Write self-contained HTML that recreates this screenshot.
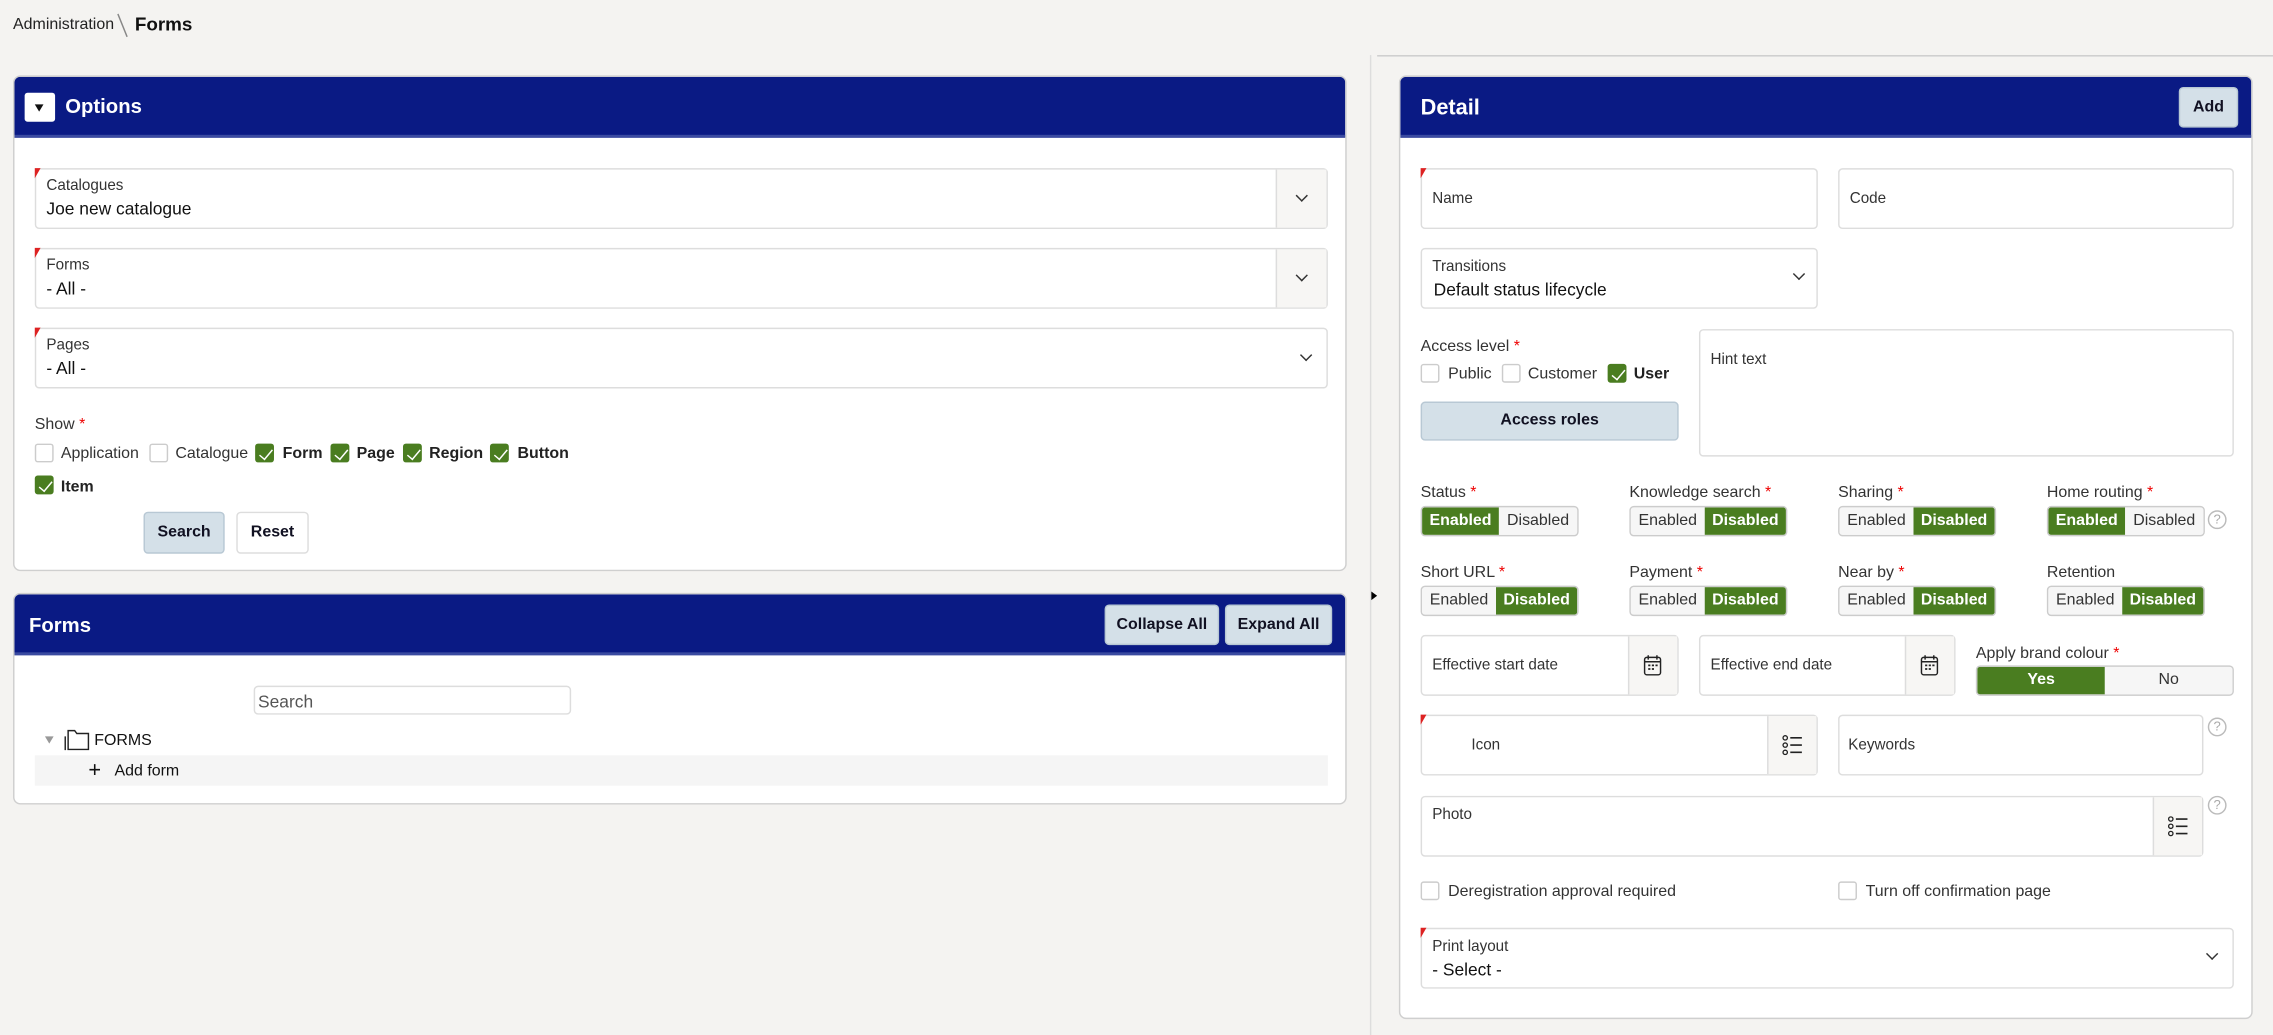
<!DOCTYPE html>
<html><head><meta charset="utf-8"><style>
*{box-sizing:border-box;margin:0;padding:0}
html,body{width:2273px;height:1034px;overflow:hidden;background:#f4f3f1}
#w{position:absolute;left:0;top:0;width:1568px;height:714px;transform:scale(1.44962);transform-origin:0 0;font-family:"Liberation Sans",sans-serif;color:#222}
.a{position:absolute}
.panel{position:absolute;background:#fff;border:1px solid #cfcfcf;border-radius:5px;overflow:hidden}
.hdr{position:absolute;left:0;right:0;top:0;height:42px;background:#0a1a84;border-bottom:2px solid #3a4aa0;color:#fff;font-weight:bold;font-size:14px}
.box{position:absolute;background:#fff;border:1px solid #ddd;border-radius:3px}
.lbl{position:absolute;font-size:10.5px;color:#333}
.val{position:absolute;font-size:12px;color:#111}
.req:before{content:"";position:absolute;left:-1px;top:-1px;border-top:7px solid #d22;border-right:4px solid transparent}
.dd{position:absolute;right:0;top:0;bottom:0;width:35px;background:#f7f6f4;border-left:1px solid #ddd}
.chev{position:absolute;width:6px;height:6px;border-right:1.3px solid #333;border-bottom:1.3px solid #333;transform:rotate(45deg)}
.cb{position:absolute;width:13px;height:13px;border:1px solid #ccc;background:#fff;border-radius:2px}
.cb.on{background:#4a7d20;border-color:#4a7d20}
.cb.on:after{content:"";position:absolute;left:3.5px;top:0.5px;width:4px;height:8px;border-right:1.3px solid #fff;border-bottom:1.3px solid #fff;transform:rotate(40deg)}
.t{position:absolute;font-size:11px;color:#333;white-space:nowrap}
.b{font-weight:bold;color:#222}
.btn{position:absolute;background:#d4e0e8;border:1px solid #b8c8d4;border-radius:3px;font-size:11px;font-weight:bold;color:#112;text-align:center}
.star{color:#e00}
.tg{position:absolute;height:21px;display:flex;border:1px solid #ccc;border-radius:3px;overflow:hidden;font-size:11px}
.tg span{display:block;line-height:19px;text-align:center;background:#f6f6f6;color:#333}
.tg span.g{background:#4a7d20;color:#fff;font-weight:bold}
.q{position:absolute;width:13px;height:13px;border:1px solid #bbb;border-radius:50%;font-size:9px;color:#aaa;text-align:center;line-height:11px}
</style></head><body><div id="w">
<div class="t" style="left:9px;top:11px;font-size:11px;color:#222">Administration</div>
<div class="a" style="left:84px;top:9px;width:1px;height:17px;background:#888;transform:rotate(-22deg)"></div>
<div class="t" style="left:93px;top:9px;font-size:13px;font-weight:bold;color:#111">Forms</div>

<div class="a" style="left:945px;top:38px;width:1px;height:676px;background:#ddd"></div>
<div class="a" style="left:950px;top:38px;width:618px;height:1px;background:#ccc"></div>
<div class="a" style="left:946px;top:408px;border-left:4px solid #000;border-top:3px solid transparent;border-bottom:3px solid transparent"></div>

<!-- Options -->
<div class="panel" style="left:9px;top:52px;width:920px;height:342px">
 <div class="hdr"><div class="a" style="left:7px;top:11px;width:21px;height:20px;background:#fff;border-radius:2px"><div class="a" style="left:7px;top:8px;border-top:5px solid #111;border-left:3.5px solid transparent;border-right:3.5px solid transparent"></div></div><div class="a" style="left:35px;top:12px">Options</div></div>
 <div class="box req" style="left:14px;top:63px;width:892px;height:42px"><div class="lbl" style="left:7px;top:5px">Catalogues</div><div class="val" style="left:7px;top:20px">Joe new catalogue</div><div class="dd"><div class="chev" style="left:14px;top:15px"></div></div></div>
 <div class="box req" style="left:14px;top:118px;width:892px;height:42px"><div class="lbl" style="left:7px;top:5px">Forms</div><div class="val" style="left:7px;top:20px">- All -</div><div class="dd"><div class="chev" style="left:14px;top:15px"></div></div></div>
 <div class="box req" style="left:14px;top:173px;width:892px;height:42px"><div class="lbl" style="left:7px;top:5px">Pages</div><div class="val" style="left:7px;top:20px">- All -</div><div class="chev" style="left:873px;top:15px"></div></div>
 <div class="t" style="left:14px;top:234px">Show <span class="star">*</span></div>
 <div class="cb" style="left:14px;top:253px"></div><div class="t" style="left:32px;top:254px">Application</div>
 <div class="cb" style="left:93px;top:253px"></div><div class="t" style="left:111px;top:254px">Catalogue</div>
 <div class="cb on" style="left:166px;top:253px"></div><div class="t b" style="left:185px;top:254px">Form</div>
 <div class="cb on" style="left:218px;top:253px"></div><div class="t b" style="left:236px;top:254px">Page</div>
 <div class="cb on" style="left:268px;top:253px"></div><div class="t b" style="left:286px;top:254px">Region</div>
 <div class="cb on" style="left:328px;top:253px"></div><div class="t b" style="left:347px;top:254px">Button</div>
 <div class="cb on" style="left:14px;top:275px"></div><div class="t b" style="left:32px;top:277px">Item</div>
 <div class="btn" style="left:89px;top:300px;width:56px;height:29px;line-height:27px">Search</div>
 <div class="btn" style="left:153px;top:300px;width:50px;height:29px;line-height:27px;background:#fff;border-color:#ddd">Reset</div>
</div>

<!-- Forms -->
<div class="panel" style="left:9px;top:409px;width:920px;height:146px">
 <div class="hdr"><div class="a" style="left:10px;top:13px">Forms</div>
  <div class="btn" style="left:752px;top:7px;width:79px;height:28px;line-height:26px">Collapse All</div>
  <div class="btn" style="left:835px;top:7px;width:74px;height:28px;line-height:26px">Expand All</div></div>
 <div class="box" style="left:165px;top:63px;width:219px;height:20px"><div class="t" style="left:2px;top:3px;font-size:12px;color:#555">Search</div></div>
 <div class="a" style="left:21px;top:98px;border-top:5px solid #999;border-left:3px solid transparent;border-right:3px solid transparent"></div>
 <svg class="a" style="left:34px;top:92px" width="20" height="16" viewBox="0 0 20 16"><path d="M3 4V15H17V4H9L7.5 2H3Z" fill="none" stroke="#222" stroke-width="1"/><path d="M1 6V15.5" stroke="#222" stroke-width="1"/></svg>
 <div class="t" style="left:55px;top:95px;color:#111">FORMS</div>
 <div class="a" style="left:14px;top:111px;width:892px;height:21px;background:#f5f5f5"></div>
 <div class="t" style="left:51px;top:113px;font-size:15px;color:#111">+</div>
 <div class="t" style="left:69px;top:116px;color:#111">Add form</div>
</div>

<!-- Detail -->
<div class="panel" style="left:965px;top:52px;width:589px;height:651px">
 <div class="hdr"><div class="a" style="left:14px;top:13px;font-size:15px">Detail</div>
  <div class="btn" style="left:537px;top:7px;width:41px;height:28px;line-height:26px">Add</div></div>
 <div class="box req" style="left:14px;top:63px;width:274px;height:42px"><div class="lbl" style="left:7px;top:14px">Name</div></div>
 <div class="box" style="left:302px;top:63px;width:273px;height:42px"><div class="lbl" style="left:7px;top:14px">Code</div></div>
 <div class="box" style="left:14px;top:118px;width:274px;height:42px"><div class="lbl" style="left:7px;top:6px">Transitions</div><div class="val" style="left:8px;top:21px;font-size:12px">Default status lifecycle</div><div class="chev" style="left:257px;top:14px"></div></div>
 <div class="t" style="left:14px;top:180px">Access level <span class="star">*</span></div>
 <div class="cb" style="left:14px;top:198px"></div><div class="t" style="left:33px;top:199px">Public</div>
 <div class="cb" style="left:70px;top:198px"></div><div class="t" style="left:88px;top:199px">Customer</div>
 <div class="cb on" style="left:143px;top:198px"></div><div class="t b" style="left:161px;top:199px">User</div>
 <div class="btn" style="left:14px;top:224px;width:178px;height:27px;line-height:25px">Access roles</div>
 <div class="box" style="left:206px;top:174px;width:369px;height:88px"><div class="lbl" style="left:7px;top:14px">Hint text</div></div>

 <div class="t" style="left:14px;top:281px">Status <span class="star">*</span></div>
 <div class="tg" style="left:14px;top:296px"><span class="g" style="width:53px">Enabled</span><span style="width:54px">Disabled</span></div>
 <div class="t" style="left:158px;top:281px">Knowledge search <span class="star">*</span></div>
 <div class="tg" style="left:158px;top:296px"><span style="width:51px">Enabled</span><span class="g" style="width:56px">Disabled</span></div>
 <div class="t" style="left:302px;top:281px">Sharing <span class="star">*</span></div>
 <div class="tg" style="left:302px;top:296px"><span style="width:51px">Enabled</span><span class="g" style="width:56px">Disabled</span></div>
 <div class="t" style="left:446px;top:281px">Home routing <span class="star">*</span></div>
 <div class="tg" style="left:446px;top:296px"><span class="g" style="width:53px">Enabled</span><span style="width:54px">Disabled</span></div>
 <div class="q" style="left:557px;top:299px">?</div>

 <div class="t" style="left:14px;top:336px">Short URL <span class="star">*</span></div>
 <div class="tg" style="left:14px;top:351px"><span style="width:51px">Enabled</span><span class="g" style="width:56px">Disabled</span></div>
 <div class="t" style="left:158px;top:336px">Payment <span class="star">*</span></div>
 <div class="tg" style="left:158px;top:351px"><span style="width:51px">Enabled</span><span class="g" style="width:56px">Disabled</span></div>
 <div class="t" style="left:302px;top:336px">Near by <span class="star">*</span></div>
 <div class="tg" style="left:302px;top:351px"><span style="width:51px">Enabled</span><span class="g" style="width:56px">Disabled</span></div>
 <div class="t" style="left:446px;top:336px">Retention</div>
 <div class="tg" style="left:446px;top:351px"><span style="width:51px">Enabled</span><span class="g" style="width:56px">Disabled</span></div>

 <div class="box" style="left:14px;top:385px;width:178px;height:42px"><div class="lbl" style="left:7px;top:14px">Effective start date</div><div class="dd" style="width:34px"><svg class="a" style="left:9px;top:12px" width="14" height="16" viewBox="0 0 14 16"><rect x="1.5" y="2.5" width="11" height="12" rx="1.5" fill="none" stroke="#222"/><path d="M1.5 5.5H12.5M4 1V4M10 1V4" stroke="#222"/><path d="M4 8h1.5M6.5 8h1.5M9 8h1.5M4 10.5h1.5M6.5 10.5h1.5" stroke="#222" stroke-width="1.2"/></svg></div></div>
 <div class="box" style="left:206px;top:385px;width:177px;height:42px"><div class="lbl" style="left:7px;top:14px">Effective end date</div><div class="dd" style="width:34px"><svg class="a" style="left:9px;top:12px" width="14" height="16" viewBox="0 0 14 16"><rect x="1.5" y="2.5" width="11" height="12" rx="1.5" fill="none" stroke="#222"/><path d="M1.5 5.5H12.5M4 1V4M10 1V4" stroke="#222"/><path d="M4 8h1.5M6.5 8h1.5M9 8h1.5M4 10.5h1.5M6.5 10.5h1.5" stroke="#222" stroke-width="1.2"/></svg></div></div>
 <div class="t" style="left:397px;top:392px">Apply brand colour <span class="star">*</span></div>
 <div class="tg" style="left:397px;top:406px;width:178px"><span class="g" style="width:89px">Yes</span><span style="width:89px">No</span></div>

 <div class="box req" style="left:14px;top:440px;width:274px;height:42px"><div class="lbl" style="left:34px;top:14px">Icon</div><div class="dd" style="width:34px"><svg class="a" style="left:9px;top:13px" width="16" height="14" viewBox="0 0 16 14"><circle cx="2.5" cy="2" r="1.5" fill="none" stroke="#222" stroke-width=".9"/><circle cx="2.5" cy="7" r="1.5" fill="none" stroke="#222" stroke-width=".9"/><circle cx="2.5" cy="12" r="1.5" fill="none" stroke="#222" stroke-width=".9"/><path d="M6 2H14M6 7H14M6 12H14" stroke="#222" stroke-width="1.1"/></svg></div></div>
 <div class="box" style="left:302px;top:440px;width:252px;height:42px"><div class="lbl" style="left:6px;top:14px">Keywords</div></div>
 <div class="q" style="left:557px;top:442px">?</div>
 <div class="box" style="left:14px;top:496px;width:540px;height:42px"><div class="lbl" style="left:7px;top:6px">Photo</div><div class="dd" style="width:34px"><svg class="a" style="left:9px;top:13px" width="16" height="14" viewBox="0 0 16 14"><circle cx="2.5" cy="2" r="1.5" fill="none" stroke="#222" stroke-width=".9"/><circle cx="2.5" cy="7" r="1.5" fill="none" stroke="#222" stroke-width=".9"/><circle cx="2.5" cy="12" r="1.5" fill="none" stroke="#222" stroke-width=".9"/><path d="M6 2H14M6 7H14M6 12H14" stroke="#222" stroke-width="1.1"/></svg></div></div>
 <div class="q" style="left:557px;top:496px">?</div>

 <div class="cb" style="left:14px;top:555px"></div><div class="t" style="left:33px;top:556px">Deregistration approval required</div>
 <div class="cb" style="left:302px;top:555px"></div><div class="t" style="left:321px;top:556px">Turn off confirmation page</div>

 <div class="box req" style="left:14px;top:587px;width:561px;height:42px"><div class="lbl" style="left:7px;top:6px">Print layout</div><div class="val" style="left:7px;top:21px;font-size:12px">- Select -</div><div class="chev" style="left:542px;top:14px"></div></div>
</div>
</div></body></html>
